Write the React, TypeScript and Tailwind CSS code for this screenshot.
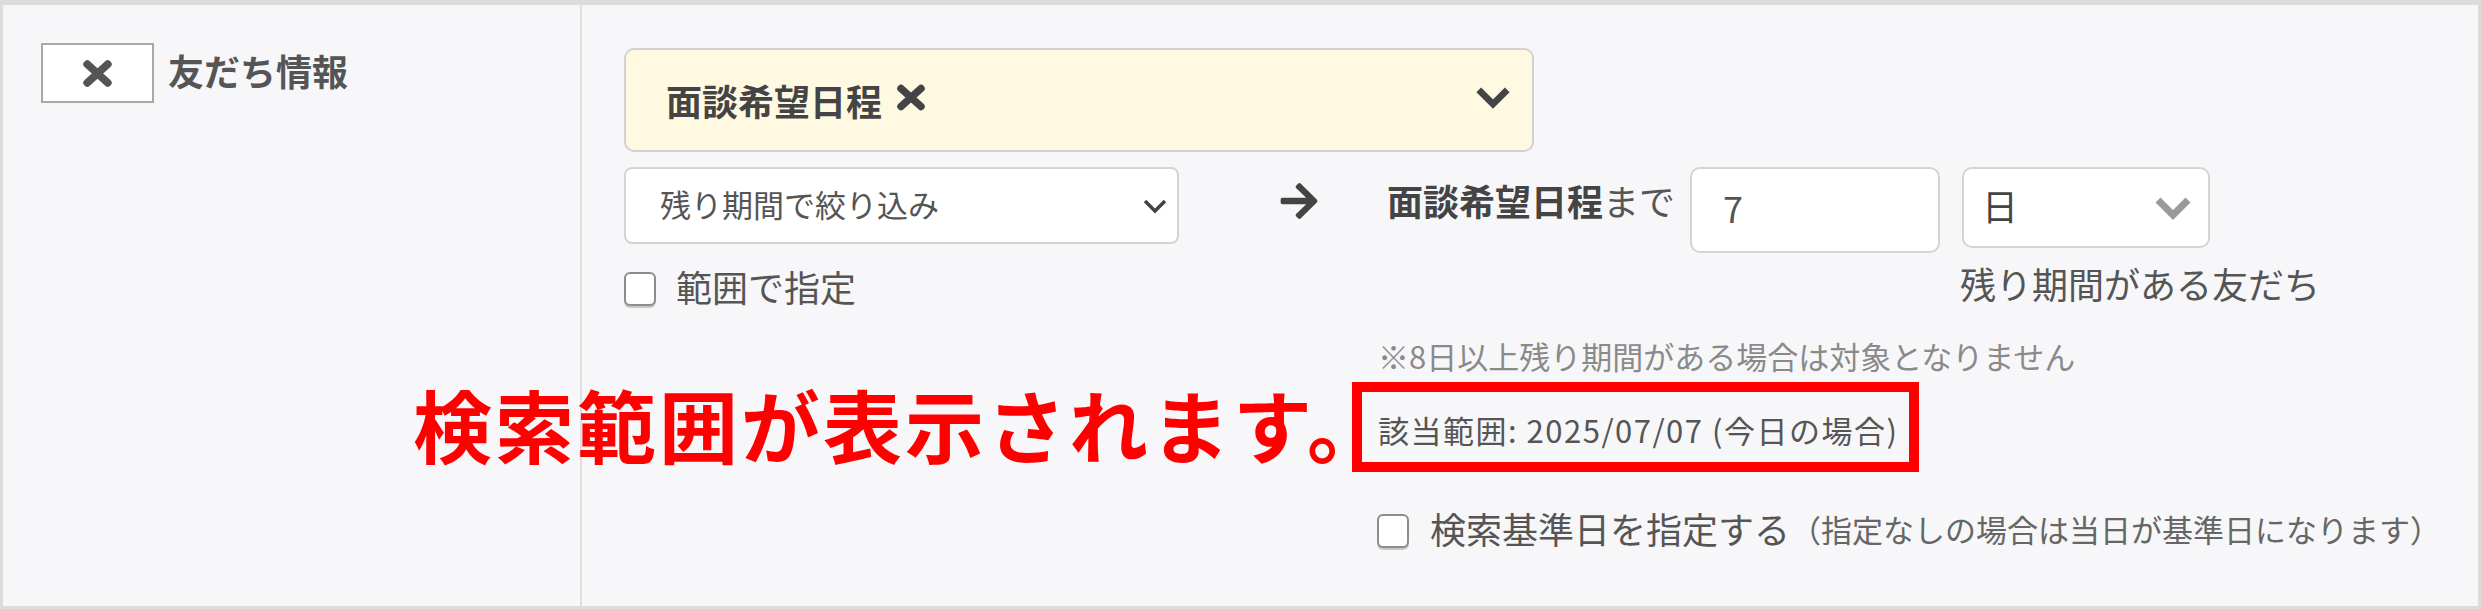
import React from 'react';
import { FaArrowRight } from 'react-icons/fa';

const Chevron: React.FC<{ w: number; h: number; color: string; stroke: number }> = ({ w, h, color, stroke }) => (
  <svg width={w} height={h} viewBox="0 0 40 28" fill="none">
    <path d="M5 6 L20 21 L35 6" stroke={color} strokeWidth={stroke} strokeLinejoin="miter" strokeLinecap="butt" />
  </svg>
);

// chunky "times" mark, FA4 style
const Times: React.FC<{ w: number; h: number; className?: string }> = ({ w, h, className }) => (
  <svg width={w} height={h} viewBox="0 0 32 28" fill="none" className={className}>
    <path d="M6 5 L26 23 M26 5 L6 23" stroke="currentColor" strokeWidth="7.5" strokeLinecap="round" />
  </svg>
);

const Checkbox: React.FC = () => (
  <div className="w-[32px] h-[34px] rounded-[6px] border-2 border-[#8c8c8c] bg-white shadow-[0_2px_0_#c8c8c8] shrink-0" />
);

const App: React.FC = () => {
  return (
    <div className="relative w-[2481px] h-[609px] bg-[#f7f7f9] border-[3px] border-t-[5px] border-[#dcdcdc] flex font-['Noto_Sans_CJK_JP','Noto_Sans',sans-serif] text-[#555]">
      {/* label column */}
      <div className="w-[579px] shrink-0 border-r-2 border-[#e0e0e0] pt-[38px] pl-[38px]">
        <div className="flex items-center">
          <div className="w-[113px] h-[60px] border-2 border-[#a8a8a8] bg-white flex items-center justify-center">
            <Times w={33} h={29} className="text-[#555]" />
          </div>
          <span className="ml-[14px] text-[36px] font-bold leading-[43px] -mt-[6px]">友だち情報</span>
        </div>
      </div>

      {/* condition column */}
      <div className="flex-1 pl-[42px] pt-[43px]">
        <div className="w-[910px] h-[104px] rounded-[10px] border-2 border-[#d2d2d2] bg-[#fff9e2] flex items-center justify-between pl-[40px] pr-[20px]">
          <div className="flex items-center text-[#444]">
            <span className="text-[36px] font-bold leading-[43px]">面談希望日程</span>
            <Times w={32} h={29} className="ml-[13px] -mt-[6px]" />
          </div>
          <div className="-mt-[6px]">
            <Chevron w={38} h={27} color="#444" stroke={7} />
          </div>
        </div>

        <div className="flex items-start mt-[15px]">
          <div className="w-[555px] shrink-0">
            <div className="h-[77px] border-2 border-[#d4d4d4] rounded-[8px] bg-white flex items-center justify-between pl-[34px] pr-[10px]">
              <span className="text-[31px] leading-[40px] -mt-[4px]">残り期間で絞り込み</span>
              <svg width="24" height="16" viewBox="0 0 24 16" fill="none">
                <path d="M2 3 L12 13 L22 3" stroke="#444" strokeWidth="3.5" />
              </svg>
            </div>
            <div className="flex items-center h-[40px] mt-[25px]">
              <Checkbox />
              <span className="ml-[20px] text-[36px] leading-[43px] -mt-[6px]">範囲で指定</span>
            </div>
          </div>

          <FaArrowRight size={42} className="ml-[99px] mt-[13px] text-[#444] shrink-0" />

          <div className="ml-[67px] flex items-start">
            <span className="mt-[12px] text-[36px] leading-[43px] whitespace-nowrap text-[#444]">
              <span className="font-bold">面談希望日程</span>
              <span className="text-[#555]">まで</span>
            </span>
            <div className="ml-[15px] w-[250px] h-[86px] border-2 border-[#d4d4d4] rounded-[10px] bg-white pl-[31px] flex items-center">
              <span className="text-[36px] leading-[43px] -mt-[6px]">7</span>
            </div>
            <div className="ml-[22px] flex flex-col">
              <div className="w-[248px] h-[81px] border-2 border-[#d4d4d4] rounded-[10px] bg-white pl-[18px] pr-[15px] flex items-center justify-between">
                <span className="text-[36px] leading-[43px] -mt-[4px] text-[#444]">日</span>
                <Chevron w={40} h={28} color="#9a9a9a" stroke={7} />
              </div>
              <span className="mt-[14px] -ml-[2px] text-[36px] leading-[43px] whitespace-nowrap">残り期間がある友だち</span>
            </div>
          </div>
        </div>

        <div className="ml-[728px] mt-[29px] flex flex-col items-start">
          <span className="ml-[26px] text-[31px] leading-[36px] text-[#8a8a8a] whitespace-nowrap">※8日以上残り期間がある場合は対象となりません</span>
          <div className="mt-[8px] w-[567px] h-[90px] border-[10px] border-[#ff0000] pl-[16px] pt-[6px] flex items-center">
            <span className="text-[31px] leading-[36px] tracking-[1.5px] whitespace-nowrap">該当範囲: 2025/07/07 (今日の場合)</span>
          </div>
          <div className="mt-[39px] ml-[25px] flex items-center h-[40px]">
            <Checkbox />
            <span className="ml-[21px] text-[36px] leading-[43px] -mt-[6px] whitespace-nowrap">検索基準日を指定する</span>
            <span className="text-[31px] leading-[40px] -mt-[4px] text-[#666] whitespace-nowrap">（指定なしの場合は当日が基準日になります）</span>
          </div>
        </div>
      </div>

      {/* annotation */}
      <div className="absolute left-[410px] top-[379px] text-[79px] leading-[79px] tracking-[3px] font-bold text-[#ff0000] whitespace-nowrap">
        検索範囲が表示されます。
      </div>
    </div>
  );
};

export default App;
